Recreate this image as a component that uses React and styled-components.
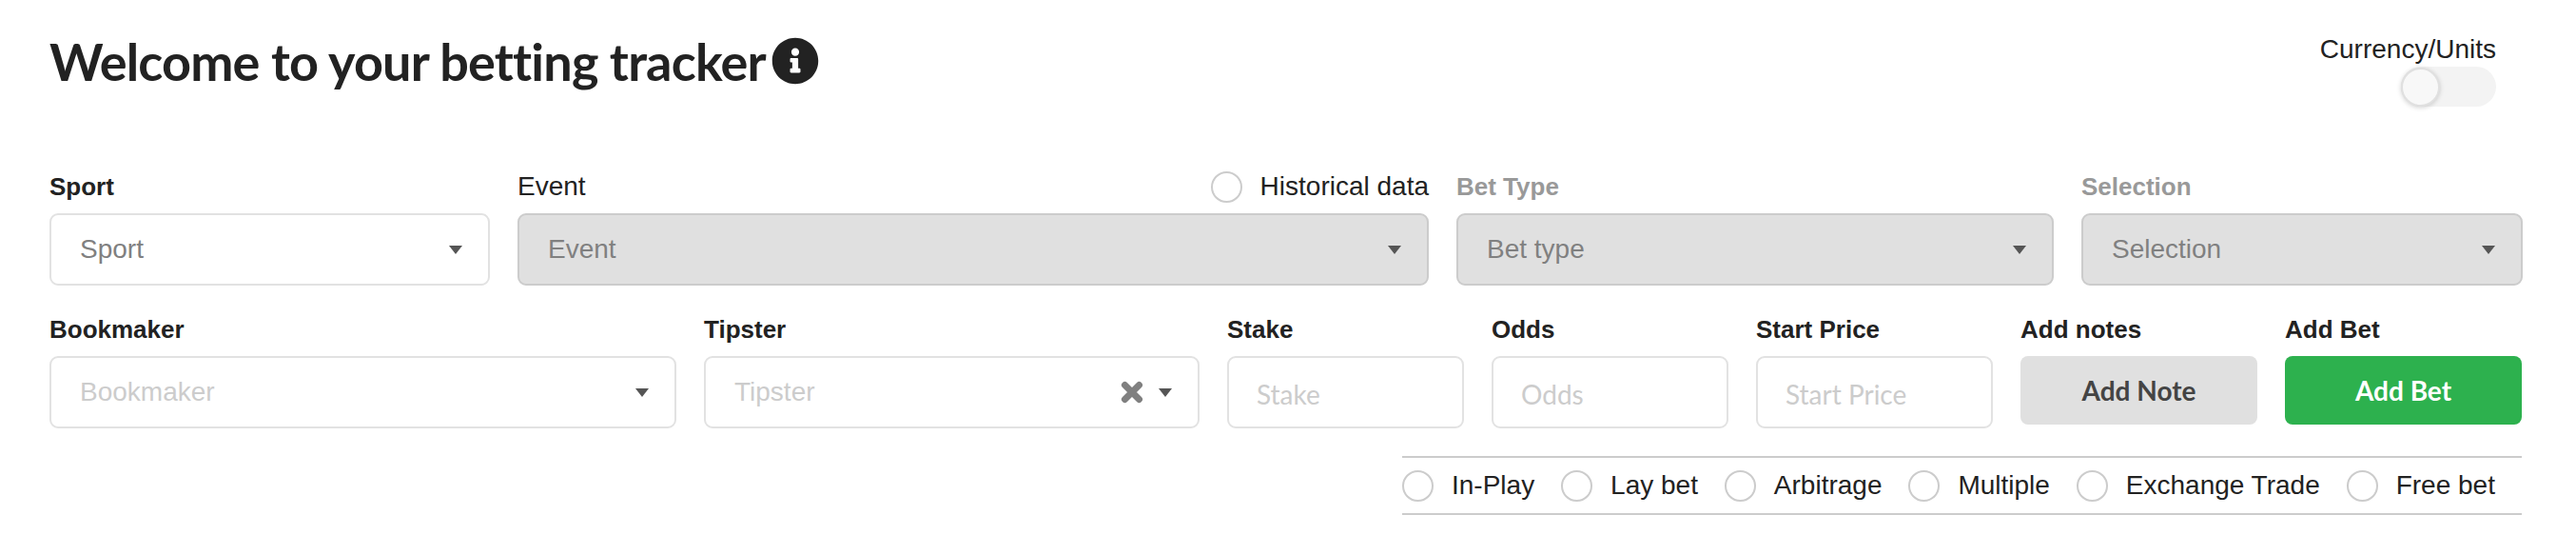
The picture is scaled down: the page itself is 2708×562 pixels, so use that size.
import React from 'react';
import styled, { createGlobalStyle } from 'styled-components';
import { FaInfoCircle } from 'react-icons/fa';

const Global = createGlobalStyle`
  html, body { margin: 0; padding: 0; background: #fff; }
  body { font-family: "Liberation Sans", Arial, sans-serif; color: #222; }
`;

const Page = styled.div`
  width: 2708px;
  height: 562px;
  box-sizing: border-box;
  padding: 0 57px 0 52px;
  overflow: hidden;
`;

const Header = styled.header`
  display: flex;
  justify-content: space-between;
  height: 174px;
  padding: 34px 27px 0 0;
  box-sizing: border-box;
`;

const TitleRow = styled.div`
  display: flex;
  align-items: flex-start;
  gap: 6px;
`;

const Title = styled.h1`
  margin: 0;
  font: 700 54px/62px Lato, sans-serif;
  letter-spacing: -0.82px;
  color: #222;
`;

const InfoIcon = styled(FaInfoCircle)`
  width: 50px;
  height: 50px;
  margin-top: 5px;
  color: #222;
`;

const CurrencyBox = styled.div`
  display: flex;
  flex-direction: column;
  align-items: flex-end;
`;

const CurrencyLabel = styled.div`
  font-size: 28px;
  line-height: 36px;
  color: #222;
`;

const Track = styled.div`
  position: relative;
  width: 100px;
  height: 42px;
  border-radius: 21px;
  background: #f3f3f3;
`;

const Thumb = styled.div`
  position: absolute;
  left: 0;
  top: 1px;
  width: 41px;
  height: 41px;
  border-radius: 50%;
  background: #f8f8f8;
  border: 2px solid #e0e0e0;
  box-sizing: border-box;
  box-shadow: 0 1px 5px rgba(0,0,0,.18);
`;

const FormRow = styled.div`
  display: grid;
  column-gap: 29px;
  grid-template-columns: ${p => p.$cols};
  margin-bottom: ${p => p.$mb || 0}px;
`;

const Field = styled.div`
  min-width: 0;
`;

const LabelRow = styled.div`
  display: flex;
  align-items: center;
  justify-content: space-between;
  height: 50px;
  padding-bottom: 6px;
  box-sizing: border-box;
`;

const Label = styled.label`
  font-size: ${p => (p.$plain ? 28 : 26)}px;
  font-weight: ${p => (p.$plain ? 400 : 700)};
  color: ${p => (p.$muted ? '#999' : '#222')};
  line-height: 30px;
`;

const SelectBox = styled.div`
  display: flex;
  align-items: center;
  height: 76px;
  box-sizing: border-box;
  padding: 0 27px 0 30px;
  border-radius: 9px;
  border: 2px solid ${p => (p.$disabled ? '#ccc' : '#e2e2e2')};
  background: ${p => (p.$disabled ? '#e0e0e0' : '#fff')};
`;

const Placeholder = styled.span`
  flex: 1;
  font-size: 28px;
  color: ${p => (p.$light ? '#ccc' : '#808080')};
`;

const Caret = styled.span`
  width: 0;
  height: 0;
  border-left: 7px solid transparent;
  border-right: 7px solid transparent;
  border-top: 9px solid #555;
`;

const ClearSvg = styled.svg`
  width: 24px;
  height: 24px;
  margin-right: 16px;
`;

const ClearIcon = () => (
  <ClearSvg viewBox="0 0 24 24" fill="none" stroke="#808080" strokeWidth="7" strokeLinecap="round">
    <path d="M4.5 4.5 L19.5 19.5 M19.5 4.5 L4.5 19.5" />
  </ClearSvg>
);

const TextInput = styled.input`
  display: block;
  width: 100%;
  height: 76px;
  box-sizing: border-box;
  padding: 4px 29px 0;
  border-radius: 9px;
  border: 2px solid #e2e2e2;
  background: #fff;
  font: 400 28px Lato, sans-serif;
  &::placeholder { color: #ccc; opacity: 1; }
`;

const ActionButton = styled.button`
  display: block;
  width: 100%;
  height: 72px;
  border: 0;
  border-radius: 8px;
  background: ${p => (p.$green ? '#2db14e' : '#e0e0e0')};
  color: ${p => (p.$green ? '#fff' : '#444')};
  font: 700 28px Lato, sans-serif;
`;

const Options = styled.div`
  display: flex;
  justify-content: space-between;
  align-items: center;
  box-sizing: border-box;
  width: 1177px;
  height: 62px;
  margin: 29px 0 0 auto;
  padding-right: 28px;
  border-top: 2px solid #ccc;
  border-bottom: 2px solid #ccc;
`;

const RadioLabel = styled.span`
  display: inline-flex;
  align-items: center;
  gap: 19px;
  font-size: 28px;
  font-weight: 400;
  color: #222;
`;

const Radio = styled.span`
  display: inline-block;
  width: 33px;
  height: 33px;
  box-sizing: border-box;
  border-radius: 50%;
  border: 2px solid #ccc;
  background: #fff;
`;

const Select = ({ text, disabled, light, clear }) => (
  <SelectBox $disabled={disabled}>
    <Placeholder $light={light}>{text}</Placeholder>
    {clear && <ClearIcon />}
    <Caret />
  </SelectBox>
);

const options = ['In-Play', 'Lay bet', 'Arbitrage', 'Multiple', 'Exchange Trade', 'Free bet'];

export default function App() {
  return (
    <Page>
      <Global />
      <Header>
        <TitleRow>
          <Title>Welcome to your betting tracker</Title>
          <InfoIcon />
        </TitleRow>
        <CurrencyBox>
          <CurrencyLabel>Currency/Units</CurrencyLabel>
          <Track><Thumb /></Track>
        </CurrencyBox>
      </Header>

      <FormRow $cols="463px 958px 628px 464px" $mb={24}>
        <Field>
          <LabelRow><Label>Sport</Label></LabelRow>
          <Select text="Sport" />
        </Field>
        <Field>
          <LabelRow>
            <Label $plain>Event</Label>
            <RadioLabel><Radio />Historical data</RadioLabel>
          </LabelRow>
          <Select text="Event" disabled />
        </Field>
        <Field>
          <LabelRow><Label $muted>Bet Type</Label></LabelRow>
          <Select text="Bet type" disabled />
        </Field>
        <Field>
          <LabelRow><Label $muted>Selection</Label></LabelRow>
          <Select text="Selection" disabled />
        </Field>
      </FormRow>

      <FormRow $cols="659px 521px 249px 249px 249px 249px 249px">
        <Field>
          <LabelRow><Label>Bookmaker</Label></LabelRow>
          <Select text="Bookmaker" light />
        </Field>
        <Field>
          <LabelRow><Label>Tipster</Label></LabelRow>
          <Select text="Tipster" light clear />
        </Field>
        <Field>
          <LabelRow><Label>Stake</Label></LabelRow>
          <TextInput placeholder="Stake" />
        </Field>
        <Field>
          <LabelRow><Label>Odds</Label></LabelRow>
          <TextInput placeholder="Odds" />
        </Field>
        <Field>
          <LabelRow><Label>Start Price</Label></LabelRow>
          <TextInput placeholder="Start Price" />
        </Field>
        <Field>
          <LabelRow><Label>Add notes</Label></LabelRow>
          <ActionButton>Add Note</ActionButton>
        </Field>
        <Field>
          <LabelRow><Label>Add Bet</Label></LabelRow>
          <ActionButton $green>Add Bet</ActionButton>
        </Field>
      </FormRow>

      <Options>
        {options.map(o => (
          <RadioLabel key={o}><Radio />{o}</RadioLabel>
        ))}
      </Options>
    </Page>
  );
}
